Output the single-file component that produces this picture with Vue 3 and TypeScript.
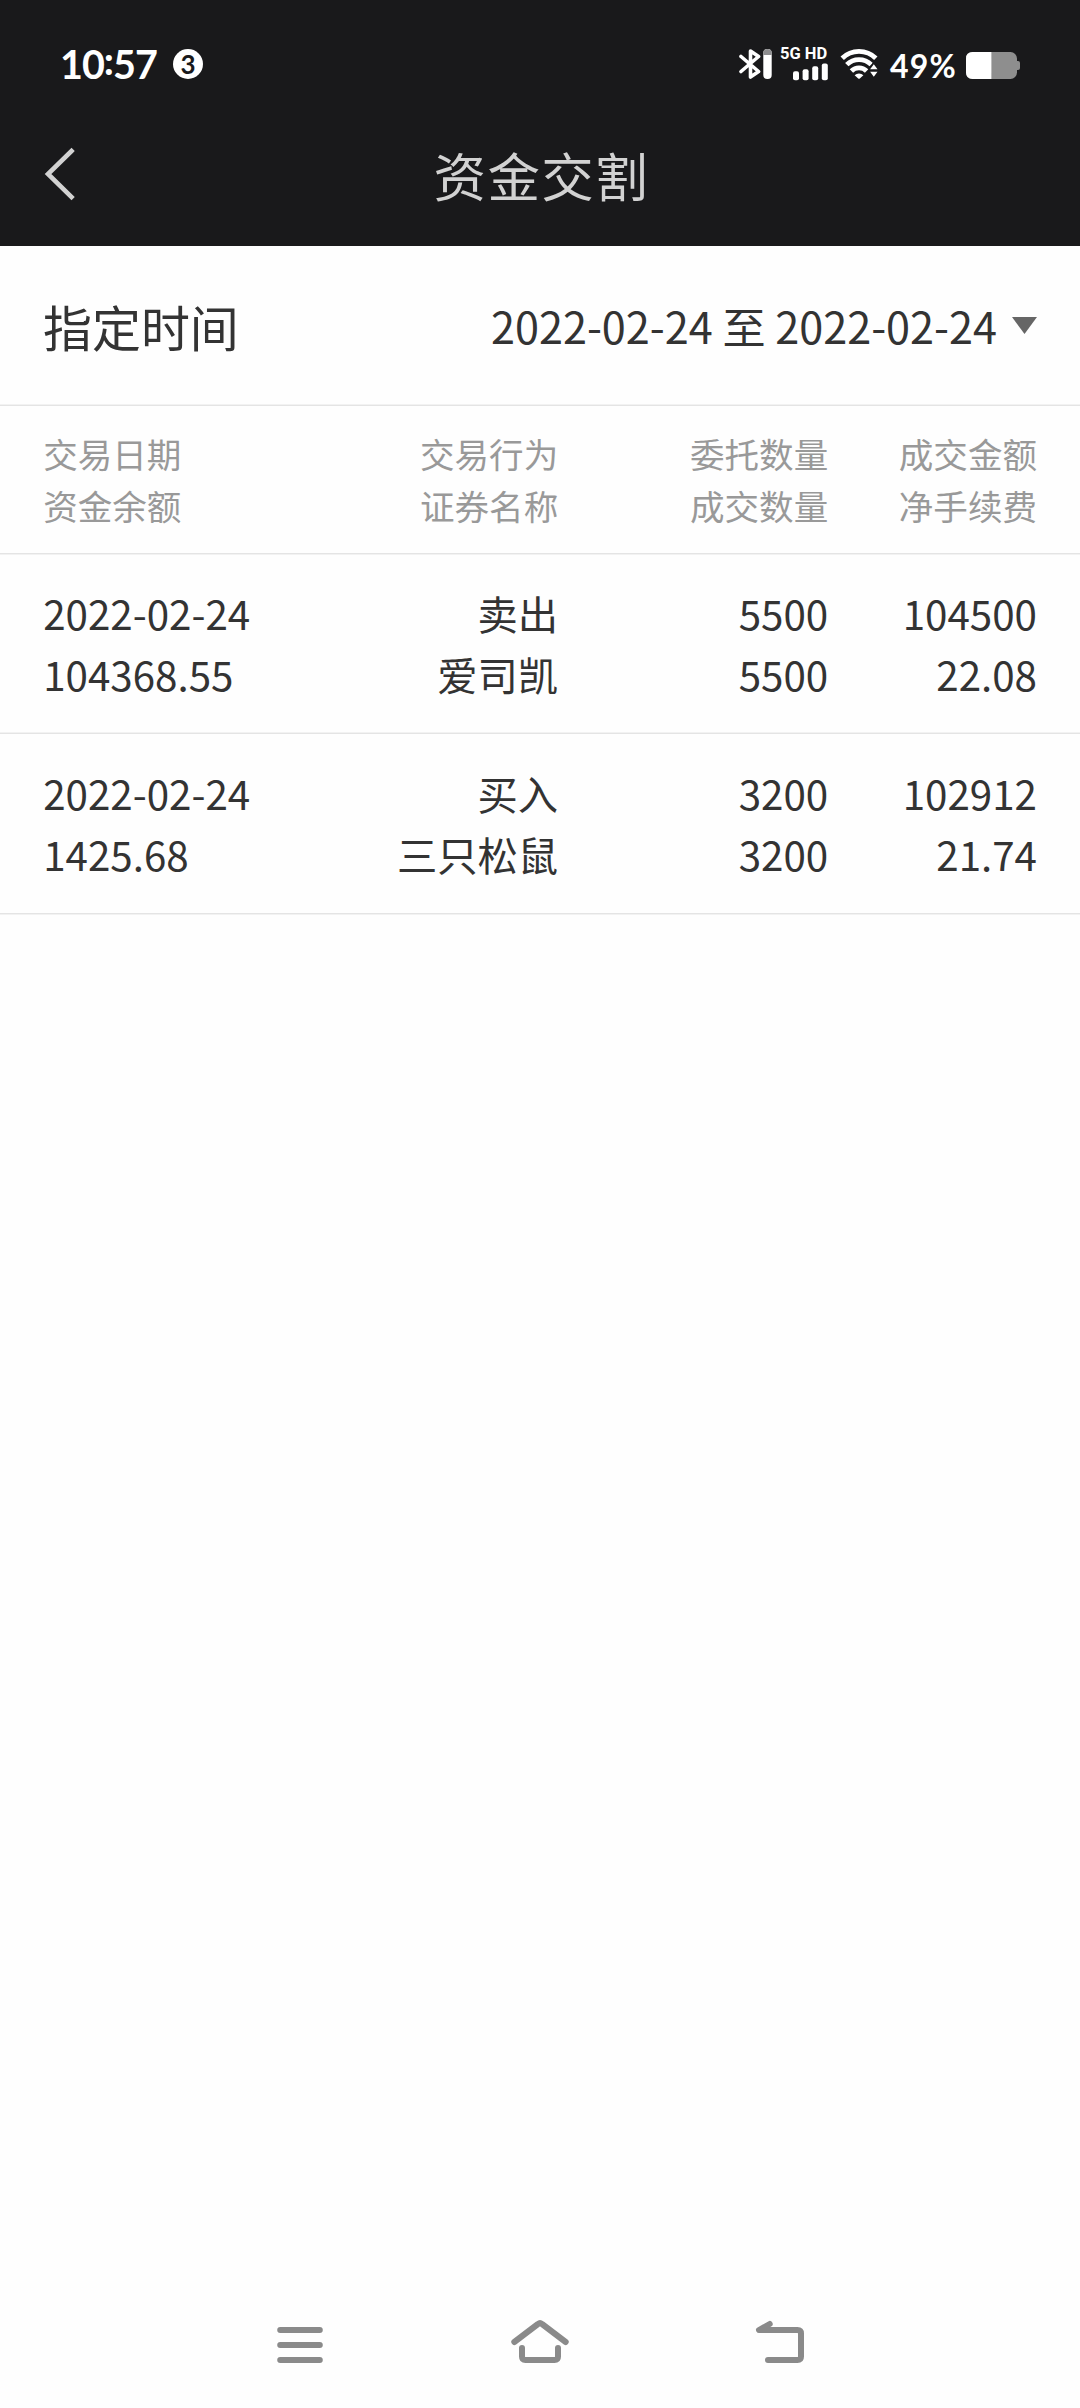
<script setup lang="ts">
interface Pair {
  top: string
  bottom: string
}

const headings: Pair[] = [
  { top: '交易日期', bottom: '资金余额' },
  { top: '交易行为', bottom: '证券名称' },
  { top: '委托数量', bottom: '成交数量' },
  { top: '成交金额', bottom: '净手续费' },
]

const records: Pair[][] = [
  [
    { top: '2022-02-24', bottom: '104368.55' },
    { top: '卖出', bottom: '爱司凯' },
    { top: '5500', bottom: '5500' },
    { top: '104500', bottom: '22.08' },
  ],
  [
    { top: '2022-02-24', bottom: '1425.68' },
    { top: '买入', bottom: '三只松鼠' },
    { top: '3200', bottom: '3200' },
    { top: '102912', bottom: '21.74' },
  ],
]
</script>

<template>
  <div class="screen">
    <header class="top">
      <div class="status">
        <span class="clock">10<span class="colon">:</span>57</span>
        <span class="badge">3</span>
        <span class="spacer"></span>
        <svg class="bt" width="34" height="32" viewBox="739 48 34 32">
          <path d="M741 56.5L758.6 71.5L750.5 77V51L758.6 56.5L741 71.5" fill="none" stroke="#fff" stroke-width="3.6" stroke-linecap="round" stroke-linejoin="round" />
          <rect x="763.3" y="49" width="8.4" height="30" rx="4" fill="#fff" />
          <path d="M763.3 55v-2a4.2 4 0 0 1 8.4 0v2z" fill="#8d8d8f" />
        </svg>
        <div class="cell-signal">
          <span class="net">5G HD</span>
          <svg width="36" height="18" viewBox="793 63 36 18">
            <g fill="#fff">
              <rect x="793" y="71.3" width="6" height="9" rx="2" />
              <rect x="802.6" y="69.3" width="6" height="11" rx="2" />
              <rect x="812.2" y="66.3" width="6" height="14" rx="2" />
              <rect x="821.8" y="63.6" width="6" height="16.7" rx="2" />
            </g>
          </svg>
        </div>
        <svg class="wifi" width="38" height="32" viewBox="840 49 38 32">
          <g fill="none" stroke="#fff" stroke-width="4.8">
            <path d="M842.2 59.2A24 24 0 0 1 875.8 59.2" />
            <path d="M846.8 65.6A17.3 17.3 0 0 1 871.2 65.6" />
            <path d="M851.4 72A10.8 10.8 0 0 1 866.6 72" />
          </g>
          <path d="M854.6 76.3a6.5 6.500 0 0 1 8.800 0L859.800 79.400q-.8.6-1.600 0z" fill="#fff" />
          <path d="M873.8 62L880 71.5V81H868V71.5z" fill="#19191b" />
          <path d="M873.8 65.300l3.700 5h-7.400zM873.800 77.800l3.700-5h-7.400z" fill="#fff" />
        </svg>
        <span class="percent">49%</span>
        <svg class="battery" width="54" height="27" viewBox="966 52 54 27">
          <rect x="966" y="52" width="51" height="27" rx="6.5" fill="#8e8e8e" />
          <path d="M1016 61h2q2 0 2 2v5q0 2-2 2h-2z" fill="#8e8e8e" />
          <path d="M991.4 52v27h-18.9q-6.5 0-6.5-6.5v-14q0-6.5 6.5-6.5z" fill="#fff" />
        </svg>
      </div>
      <div class="titlebar">
        <svg class="back" width="32" height="54" viewBox="44 147 32 54">
          <path d="M71.5 151L48 174L71.5 197" fill="none" stroke="#d2d2d2" stroke-width="4.6" stroke-linecap="square" />
        </svg>
        <h1>资金交割</h1>
      </div>
    </header>

    <section class="filter">
      <span class="label">指定时间</span>
      <span class="range">2022-02-24 至 2022-02-24</span>
      <svg class="caret" width="25" height="17" viewBox="0 0 25 17"><path d="M0 0H25L12.5 17z" fill="#666" /></svg>
    </section>
    <div class="rule rising"></div>

    <section class="cols headings">
      <div v-for="h in headings" :key="h.top" class="cell">
        <div>{{ h.top }}</div>
        <div>{{ h.bottom }}</div>
      </div>
    </section>
    <div class="rule"></div>

    <template v-for="(record, i) in records" :key="i">
      <section class="cols record" :class="{ later: i > 0 }">
        <div v-for="(c, j) in record" :key="j" class="cell">
          <div>{{ c.top }}</div>
          <div>{{ c.bottom }}</div>
        </div>
      </section>
      <div class="rule" :class="{ rising: i === 0 }"></div>
    </template>

    <nav class="sysnav">
      <svg width="60" height="60" viewBox="270 2315 60 60">
        <path d="M280.2 2330h39.6M280.2 2345h39.6M280.2 2360h39.6" />
      </svg>
      <svg width="60" height="60" viewBox="510 2315 60 60">
        <path d="M514.3 2342L538 2324q2-1.6 4 0L565.7 2342M522 2348v8.5q0 3.5 3.5 3.5h29q3.5 0 3.5-3.5v-8.5" />
      </svg>
      <svg width="60" height="60" viewBox="750 2315 60 60">
        <path d="M769.7 2324L759 2330H797.5q3.5 0 3.5 3.5v23q0 3.5-3.5 3.5H768" />
      </svg>
    </nav>
  </div>
</template>

<style>
body {
  background: #fefefe;
}
</style>

<style scoped>
.screen {
  width: 1080px;
  height: 2408px;
  overflow: hidden;
  display: flex;
  flex-direction: column;
  background: #fefefe;
  color: #333;
  font-family: "Noto Sans CJK SC", sans-serif;
}
.top {
  height: 246px;
  background: #19191b;
  color: #fff;
}
.status {
  height: 128px;
  box-sizing: border-box;
  padding: 0 60px 0 60px;
  display: flex;
  align-items: center;
  font-family: Lato, sans-serif;
  font-weight: 700;
}
.clock {
  width: 113px;
  font-size: 39.5px;
  line-height: 40px;
  letter-spacing: -1px;
  white-space: nowrap;
}
.colon {
  position: relative;
  top: -4px;
}
.badge {
  width: 30px;
  height: 30px;
  border-radius: 50%;
  background: #fff;
  color: #19191b;
  font-size: 26px;
  line-height: 30px;
  text-align: center;
}
.spacer {
  flex: 1;
}
.bt {
  margin-right: 7px;
}
.cell-signal {
  width: 49px;
  height: 34px;
  display: flex;
  flex-direction: column;
  justify-content: space-between;
  align-items: flex-end;
  margin-right: 11px;
}
.net {
  width: 49px;
  font: 700 16.5px/14px Roboto, sans-serif;
  white-space: nowrap;
}
.wifi {
  margin-right: 12px;
}
.percent {
  width: 76px;
  font-size: 32px;
  line-height: 36px;
  letter-spacing: 1.2px;
  position: relative;
  top: 2px;
}
.battery {
  position: relative;
  top: 1.5px;
}
.titlebar {
  height: 91px;
  display: flex;
  align-items: center;
  padding: 0 44px;
}
.back {
  margin-right: 357.5px;
}
h1 {
  margin: 0;
  color: #d2d2d2;
  font-size: 52.5px;
  font-weight: 400;
  line-height: 80px;
  letter-spacing: 1.4px;
}
.filter {
  height: 158px;
  box-sizing: border-box;
  padding: 0 43px;
  display: flex;
  align-items: center;
}
.label {
  flex: 1;
  font-size: 48.96px;
}
.range {
  font-size: 43.2px;
}
.caret {
  margin-left: 15px;
}
.rule {
  height: 2px;
  box-sizing: border-box;
  border-top: 1px solid #e4e4e4;
  border-bottom: 1px solid #f2f2f2;
}
.rule.rising {
  border-top-color: #f2f2f2;
  border-bottom-color: #e4e4e4;
}
.cols {
  display: grid;
  grid-template-columns: 245px 270px 270px 208.8px;
  padding-left: 43.2px;
}
.cell {
  text-align: right;
}
.cell:first-child {
  text-align: left;
}
.headings {
  height: 147px;
  box-sizing: border-box;
  padding-top: 21px;
  color: #999;
  font-size: 34.56px;
  line-height: 52px;
}
.record {
  height: 177px;
  box-sizing: border-box;
  padding-top: 27px;
  font-size: 40.32px;
  line-height: 61px;
}
.record.later {
  height: 179px;
  padding-top: 28px;
}
.sysnav {
  margin-top: auto;
  height: 93px;
  display: flex;
  justify-content: center;
  gap: 180px;
}
.sysnav svg {
  fill: none;
  stroke: #8a8a8a;
  stroke-width: 6;
  stroke-linecap: round;
  stroke-linejoin: round;
}
</style>
